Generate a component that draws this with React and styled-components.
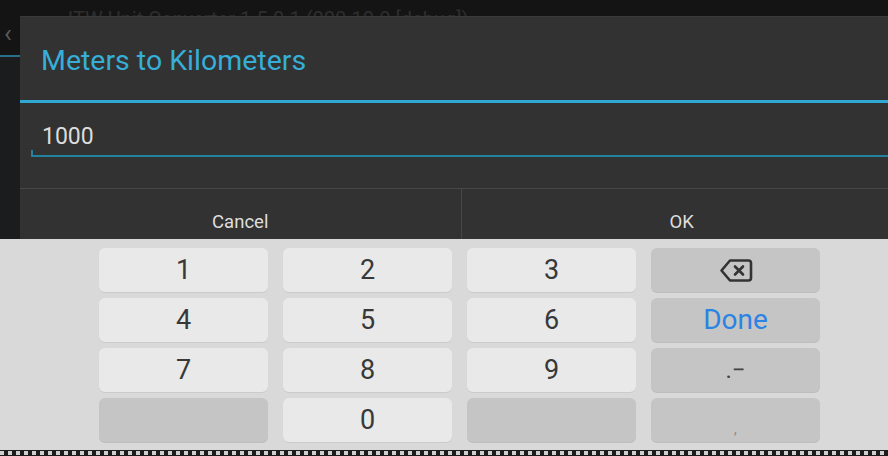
import React from "react";
import styled, { createGlobalStyle } from "styled-components";

const Global = createGlobalStyle`
  html, body { margin: 0; padding: 0; background: #121212; }
  body { font-family: Roboto, "Noto Sans", "Liberation Sans", sans-serif; }
  * { box-sizing: border-box; }
`;

const Page = styled.div`
  width: 888px;
  height: 456px;
  overflow: hidden;
  display: flex;
  flex-direction: column;
  background: #121212;
`;

const Screen = styled.div`
  position: relative;
  height: 239px;
  flex: none;
  overflow: hidden;
  display: flex;
  flex-direction: column;
`;

const ActionBar = styled.div`
  height: 57px;
  display: flex;
  align-items: flex-start;
  gap: 16px;
  padding: 7px 0 0 4px;
  background: #141414;
  border-bottom: 2px solid #2a6f8a;
`;

const Chevron = styled.span`
  align-self: center;
  color: #5a5a5a;
  font-size: 26px;
  margin-top: 4px;
`;

const AppTitle = styled.span`
  color: #2e2e2e;
  font-size: 20px;
  margin-left: 40px;
`;

const AppBody = styled.div`
  flex: 1;
  background: #1b1c1e;
`;

const Dialog = styled.div`
  position: absolute;
  top: 16px;
  left: 20px;
  width: 882px;
  height: 240px;
  background: #323232;
  border-top: 1px solid #3a3a3a;
  display: flex;
  flex-direction: column;
`;

const TitleBar = styled.div`
  height: 83px;
  display: flex;
  align-items: center;
  padding-left: 21px;
  padding-top: 4px;
  font-size: 28.5px;
  color: #36aed8;
`;

const TitleRule = styled.div`
  height: 3px;
  background: #2fa9d4;
`;

const Body = styled.div`
  height: 85px;
  padding: 11px 0 0 11px;
`;

const Field = styled.div`
  position: relative;
  height: 43px;
  padding: 10px 0 0 11px;
  font-size: 23px;
  line-height: 1.1;
  color: #dcdcdc;
  border-bottom: 2px solid #22829f;
  &::before {
    content: "";
    position: absolute;
    left: 0;
    bottom: 0;
    width: 2px;
    height: 5px;
    background: #22829f;
  }
`;

const Buttons = styled.div`
  display: flex;
  border-top: 1px solid #474747;
  height: 66px;
`;

const DialogButton = styled.div`
  flex: 1;
  display: flex;
  justify-content: center;
  align-items: center;
  font-size: 18.5px;
  color: #dedede;
  & + & { border-left: 1px solid #474747; }
`;

const Keyboard = styled.div`
  flex: 1;
  background: #d9d9d9;
  display: flex;
  flex-direction: column;
`;

const KeyGrid = styled.div`
  display: grid;
  grid-template-columns: repeat(4, 169px);
  grid-auto-rows: 44px;
  column-gap: 15px;
  row-gap: 6px;
  padding: 9px 0 0 99px;
  height: 211px;
`;

const Key = styled.div`
  border-radius: 6px;
  background: ${(p) => (p.$dark ? "#c5c5c5" : "#e9e9e9")};
  box-shadow: 0 1px 0 ${(p) => (p.$dark ? "#bdbdbd" : "#cbcbcb")};
  display: flex;
  justify-content: center;
  align-items: ${(p) => (p.$low ? "flex-end" : "center")};
  padding-bottom: ${(p) => (p.$low ? "6px" : "0")};
  font-size: ${(p) => p.$size || 27}px;
  color: ${(p) => p.$color || "#383838"};
  line-height: 1;
`;

const Strip = styled.div`
  height: 6px;
  background:
    repeating-linear-gradient(90deg, #cfcfcf 0 4px, #1c1c1c 4px 8px) 0 1px / 100% 4px no-repeat,
    #1c1c1c;
`;

const Backspace = () => (
  <svg width="34" height="25" viewBox="0 0 34 25" fill="none">
    <path
      d="M11 2.5 H29.5 a2.5 2.5 0 0 1 2.5 2.5 V20 a2.5 2.5 0 0 1 -2.5 2.5 H11 L2.5 12.5 Z"
      stroke="#333"
      strokeWidth="2.6"
      strokeLinejoin="round"
    />
    <path d="M16 8.5 L24 16.5 M24 8.5 L16 16.5" stroke="#333" strokeWidth="2.6" strokeLinecap="round" />
  </svg>
);

export default function App() {
  return (
    <>
      <Global />
      <Page>
        <Screen>
          <ActionBar>
            <Chevron>‹</Chevron>
            <AppTitle>ITW Unit Converter 1.5.0.1 (000.10.0 [debug])</AppTitle>
          </ActionBar>
          <AppBody />
          <Dialog>
            <TitleBar>Meters to Kilometers</TitleBar>
            <TitleRule />
            <Body>
              <Field>1000</Field>
            </Body>
            <Buttons>
              <DialogButton>Cancel</DialogButton>
              <DialogButton>OK</DialogButton>
            </Buttons>
          </Dialog>
        </Screen>
        <Keyboard>
          <KeyGrid>
            <Key>1</Key>
            <Key>2</Key>
            <Key>3</Key>
            <Key $dark><Backspace /></Key>
            <Key>4</Key>
            <Key>5</Key>
            <Key>6</Key>
            <Key $dark $color="#2b83e3" $size={28}>Done</Key>
            <Key>7</Key>
            <Key>8</Key>
            <Key>9</Key>
            <Key $dark $size={24} $color="#444">.−</Key>
            <Key $dark />
            <Key>0</Key>
            <Key $dark />
            <Key $dark $low $size={14} $color="#8a8a8a">,</Key>
          </KeyGrid>
          <Strip />
        </Keyboard>
      </Page>
    </>
  );
}
